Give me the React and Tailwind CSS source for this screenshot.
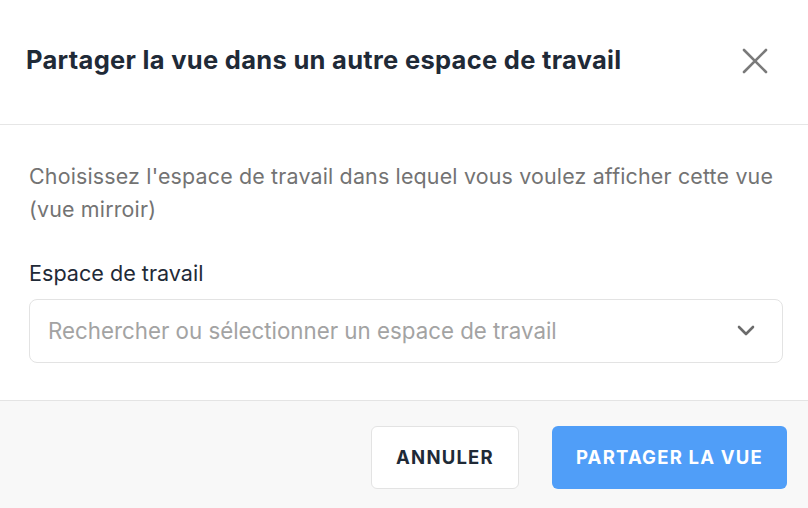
import React from "react";

export default function App() {
  return (
    <div className="w-[808px] h-[508px] bg-white flex flex-col overflow-hidden" style={{ fontFamily: "Inter, 'Liberation Sans', sans-serif" }}>
      <div className="h-[125px] flex items-center justify-between pl-[26px] pr-[40px] border-b border-[#e6e6e6] shrink-0">
        <h1 className="text-[25.5px] font-bold text-[#1f2a37] tracking-[0.3px] mt-[-3px] whitespace-nowrap">Partager la vue dans un autre espace de travail</h1>
        <svg width="26" height="26" viewBox="0 0 26 26" className="mt-[-3px]">
          <path d="M2 2 L24 24 M24 2 L2 24" stroke="#7a7a7a" strokeWidth="2.6" strokeLinecap="round" />
        </svg>
      </div>
      <div className="flex-1 px-[29px] pt-[35px]">
        <p className="text-[21.4px] leading-[33px] text-[#737373] tracking-[0.18px] mr-[-12px]">Choisissez l'espace de travail dans lequel vous voulez afficher cette vue (vue mirroir)</p>
        <div className="mt-[32px] text-[21.6px] text-[#1f2a37] leading-[30px]">Espace de travail</div>
        <div className="mt-[11px] w-[754px] h-[64px] border border-[#e3e3e3] rounded-[8px] flex items-center justify-between pl-[18px] pr-[26px]">
          <span className="text-[22.3px] text-[#a3a3a3]">Rechercher ou sélectionner un espace de travail</span>
          <svg width="20" height="12" viewBox="0 0 20 12">
            <path d="M3 2 L10 9 L17 2" stroke="#6b6b6b" strokeWidth="2.6" fill="none" strokeLinecap="round" strokeLinejoin="round" />
          </svg>
        </div>
      </div>
      <div className="h-[108px] shrink-0 bg-[#f8f8f8] border-t border-[#e4e4e4] flex items-center justify-end gap-[33px] pr-[21px] pt-[6px]">
        <button className="w-[148px] h-[63px] bg-white border border-[#e3e3e3] rounded-[6px] text-[18.5px] font-bold tracking-[1.2px] text-[#1f2a37]">ANNULER</button>
        <button className="w-[235px] h-[63px] bg-[#509ef8] rounded-[6px] text-[18.5px] font-bold tracking-[1.2px] text-white">PARTAGER LA VUE</button>
      </div>
    </div>
  );
}
